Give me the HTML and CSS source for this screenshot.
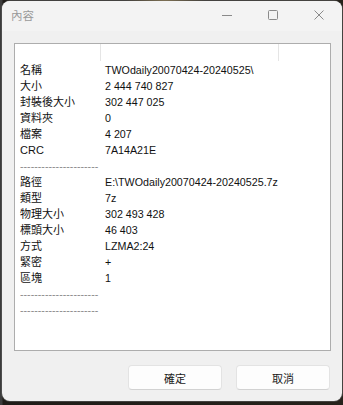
FILE: index.html
```html
<!DOCTYPE html>
<html lang="zh-Hant">
<head>
<meta charset="utf-8">
<title>內容</title>
<link rel="stylesheet" href="styles.css">
</head>
<body>
<div class="window">
  <div class="titlebar">
    <span class="title">內容</span>
    <div class="caption">
      <span class="cbtn"><svg width="10" height="10" viewBox="0 0 10 10"><path d="M0 5.5H10" stroke="#8a8a8a" stroke-width="1" fill="none"/></svg></span>
      <span class="cbtn"><svg width="10" height="10" viewBox="0 0 10 10"><rect x="0.5" y="0.5" width="9" height="9" rx="1" stroke="#8a8a8a" stroke-width="1" fill="none"/></svg></span>
      <span class="cbtn"><svg width="10" height="10" viewBox="0 0 10 10"><path d="M0.5 0.5L9.5 9.5M9.5 0.5L0.5 9.5" stroke="#8a8a8a" stroke-width="1" fill="none"/></svg></span>
    </div>
  </div>
  <div class="content">
    <div class="list">
      <div class="header">
        <div class="hc c1"></div>
        <div class="hc c2"></div>
        <div class="hc c3"></div>
      </div>
      <div class="rows">
        <div class="row"><span class="k">名稱</span><span class="v">TWOdaily20070424-20240525\</span></div>
        <div class="row"><span class="k">大小</span><span class="v">2 444 740 827</span></div>
        <div class="row"><span class="k">封裝後大小</span><span class="v">302 447 025</span></div>
        <div class="row"><span class="k">資料夾</span><span class="v">0</span></div>
        <div class="row"><span class="k">檔案</span><span class="v">4 207</span></div>
        <div class="row"><span class="k">CRC</span><span class="v">7A14A21E</span></div>
        <div class="row"><span class="k dash">----------------------</span><span class="v"></span></div>
        <div class="row"><span class="k">路徑</span><span class="v">E:\TWOdaily20070424-20240525.7z</span></div>
        <div class="row"><span class="k">類型</span><span class="v">7z</span></div>
        <div class="row"><span class="k">物理大小</span><span class="v">302 493 428</span></div>
        <div class="row"><span class="k">標頭大小</span><span class="v">46 403</span></div>
        <div class="row"><span class="k">方式</span><span class="v">LZMA2:24</span></div>
        <div class="row"><span class="k">緊密</span><span class="v">+</span></div>
        <div class="row"><span class="k">區塊</span><span class="v">1</span></div>
        <div class="row"><span class="k dash">----------------------</span><span class="v"></span></div>
        <div class="row"><span class="k dash">----------------------</span><span class="v"></span></div>
      </div>
    </div>
    <div class="buttons">
      <button class="btn">確定</button>
      <button class="btn">取消</button>
    </div>
  </div>
</div>
</body>
</html>
```

FILE: styles.css
```css
html, body {
  margin: 0;
  padding: 0;
}
body {
  width: 343px;
  height: 405px;
  overflow: hidden;
  background: radial-gradient(ellipse 40px 6px at 165px 0px, #b8964f 0%, rgba(120,95,40,0.6) 60%, rgba(0,0,0,0) 100%),
              linear-gradient(90deg, #3c3c3c 0px, #3c3c3c 2px, #1f1c18 3px, #26221b 100%);
  font-family: "Liberation Sans", "Noto Sans CJK TC", sans-serif;
}
.window {
  margin: 1px 0 0 2px;
  width: 340px;
  height: 400px;
  background: #f0f0f0;
  border-radius: 8px;
  box-shadow: 0 0 0 1px rgba(90,90,90,0.6);
  display: flex;
  flex-direction: column;
  overflow: hidden;
}
.titlebar {
  height: 30px;
  box-sizing: border-box;
  padding-bottom: 3px;
  display: flex;
  align-items: center;
  background: #f3f3f3;
}
.title {
  margin-left: 9px;
  font-family: "Noto Sans CJK TC", sans-serif;
  font-size: 11.5px;
  color: #9a9a9a;
  flex: 1;
}
.caption {
  display: flex;
}
.cbtn {
  width: 46px;
  display: flex;
  justify-content: center;
  align-items: center;
}
.cbtn svg {
  display: block;
}
.content {
  flex: 1;
  display: flex;
  flex-direction: column;
  padding: 12px 11px 11px 12px;
}
.list {
  height: 308px;
  box-sizing: border-box;
  border: 1px solid #adadad;
  background: #ffffff;
  display: flex;
  flex-direction: column;
}
.header {
  height: 18px;
  display: flex;
}
.hc {
  height: 17px;
}
.c1 {
  width: 85px;
  border-right: 1px solid #e5e5e5;
}
.c2 {
  width: 177px;
  border-right: 1px solid #e5e5e5;
}
.c3 {
  flex: 1;
}
.rows {
  display: flex;
  flex-direction: column;
}
.row {
  display: grid;
  grid-template-columns: 86px 1fr;
  height: 16px;
  line-height: 16px;
  font-size: 11px;
  color: #111;
  white-space: nowrap;
}
.k {
  padding-left: 5px;
}
.v {
  padding-left: 4px;
  font-size: 10.7px;
}
.dash {
  color: #8a8a8a;
  font-size: 10.7px;
}
.buttons {
  margin-top: 14px;
  margin-right: 1px;
  display: flex;
  justify-content: flex-end;
  gap: 14px;
}
.btn {
  width: 94px;
  height: 25px;
  box-sizing: border-box;
  border: 1px solid #e3e3e3;
  border-bottom-color: #d2d2d2;
  border-radius: 4px;
  background: #fdfdfd;
  font-family: "Noto Sans CJK TC", sans-serif;
  font-size: 11px;
  color: #1a1a1a;
  padding: 0;
}
```
